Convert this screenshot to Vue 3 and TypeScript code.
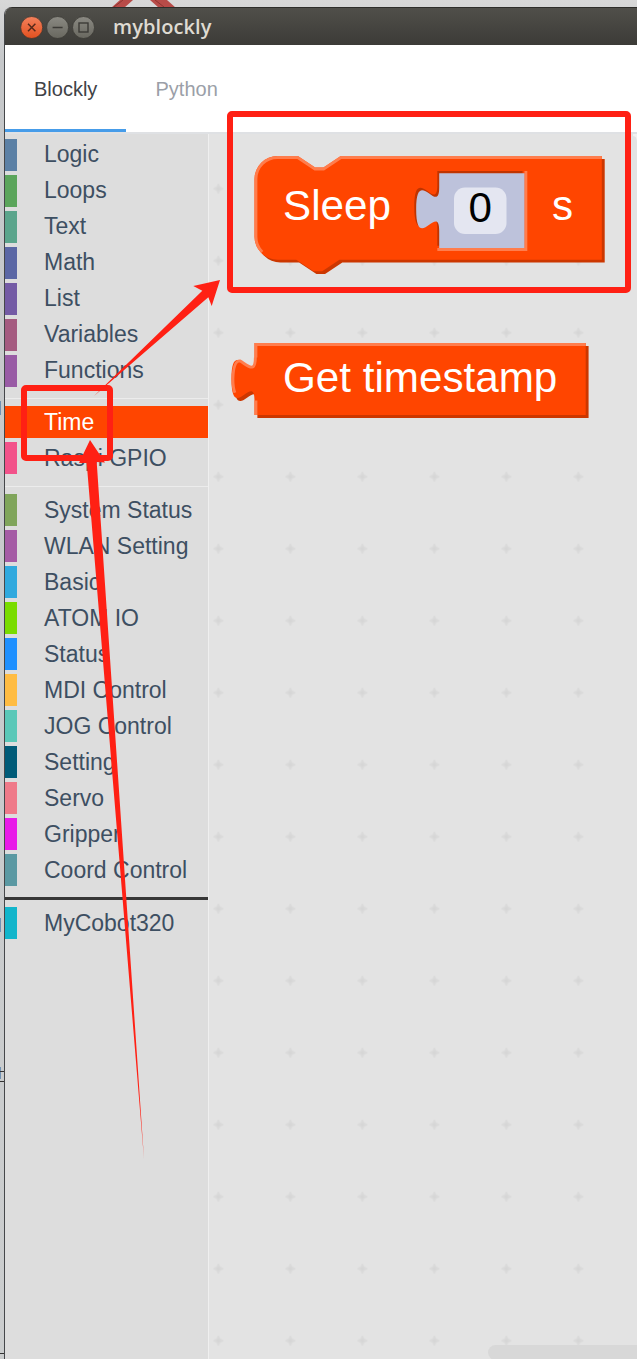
<script setup lang="ts">
interface Category {
  name: string
  color: string
  active?: boolean
}

const groups: { divider: string; items: Category[] }[] = [
  {
    divider: 'none',
    items: [
      { name: 'Logic', color: '#5b80a5' },
      { name: 'Loops', color: '#5ba55b' },
      { name: 'Text', color: '#5ba58c' },
      { name: 'Math', color: '#5b67a5' },
      { name: 'List', color: '#745ba5' },
      { name: 'Variables', color: '#a55b80' },
      { name: 'Functions', color: '#995ba5' },
    ],
  },
  {
    divider: 'light',
    items: [
      { name: 'Time', color: '#ff4500', active: true },
      { name: 'Raspi GPIO', color: '#f2528a' },
    ],
  },
  {
    divider: 'light',
    items: [
      { name: 'System Status', color: '#80a55b' },
      { name: 'WLAN Setting', color: '#a55ba5' },
      { name: 'Basic', color: '#30a9de' },
      { name: 'ATOM IO', color: '#79dc00' },
      { name: 'Status', color: '#1e90ff' },
      { name: 'MDI Control', color: '#ffbc42' },
      { name: 'JOG Control', color: '#5ac8b8' },
      { name: 'Setting', color: '#005b78' },
      { name: 'Servo', color: '#ef7a89' },
      { name: 'Gripper', color: '#e81be8' },
      { name: 'Coord Control', color: '#5b99a3' },
    ],
  },
  { divider: 'dark', items: [{ name: 'MyCobot320', color: '#12b5cb' }] },
]

const sleepPath =
  'M0,8 A8,8 0 0,1 8,0 H15 l6,4 3,0 6,-4 H120.6 V36 H29.5 l-6,4 -3,0 -6,-4 H8 A8,8 0 0,1 0,28 Z'
const stampPath = 'M0,0 H115 V25 H0 V20 c0,-10 -8,8 -8,-7.5 s8,2.5 8,-7.5 Z'
const valuePath = 'M0,0 H29.6 V26 H0 V20 c0,-10 -8,8 -8,-7.5 s8,2.5 8,-7.5 Z'
</script>

<template>
  <div class="screen">
    <svg class="backdrop" width="637" height="1359" viewBox="0 0 637 1359">
      <path d="M111 8 L120 0 H133 L124 8 Z M150 0 H167 L176 8 H159 Z" fill="#b84b48" />
      <path d="M114 7 L123 0 M155 0 L164 7" stroke="#8f3431" stroke-width="1" />
      <path d="M0 401 h1 v14 h-1z M0 918 h1 v14 h-1z M0 1067 h1 v12 h-1z" fill="#6f91b3" />
      <path d="M0 1071.5 h4 M0 1081.5 h4 M0 1353.5 h4" stroke="#333" stroke-width="1.2" />
    </svg>
    <div class="window">
      <header class="titlebar">
        <svg class="controls" width="76" height="24" viewBox="0 0 76 24">
          <defs>
            <linearGradient id="close" x2="0" y2="1">
              <stop offset="0" stop-color="#f4815c" />
              <stop offset="1" stop-color="#e2501f" />
            </linearGradient>
            <linearGradient id="grey" x2="0" y2="1">
              <stop offset="0" stop-color="#8b8a83" />
              <stop offset="1" stop-color="#68675f" />
            </linearGradient>
          </defs>
          <circle cx="11.7" cy="11.5" r="11" fill="url(#close)" stroke="#35342f" stroke-width=".7" />
          <path d="M8 7.8 l7.4 7.4 M15.4 7.8 l-7.4 7.4" stroke="#57291a" stroke-width="1.5" />
          <circle cx="37.6" cy="11.5" r="11" fill="url(#grey)" stroke="#35342f" stroke-width=".7" />
          <path d="M32.6 11.5 h10" stroke="#3c3b37" stroke-width="1.4" />
          <circle cx="63.5" cy="11.5" r="11" fill="url(#grey)" stroke="#35342f" stroke-width=".7" />
          <rect x="59" y="7" width="9" height="9" fill="none" stroke="#3c3b37" stroke-width="1.4" />
        </svg>
        <span class="title">myblockly</span>
      </header>
      <nav class="tabs">
        <div class="tab current">Blockly</div>
        <div class="tab">Python</div>
      </nav>
      <main class="body">
        <aside class="toolbox">
          <template v-for="(group, i) in groups" :key="i">
            <div v-if="group.divider !== 'none'" class="divider" :class="group.divider"></div>
            <div
              v-for="item in group.items"
              :key="item.name"
              class="row"
              :class="{ active: item.active, lower: i > 0 }"
              :style="{ borderLeftColor: item.color }"
            >
              {{ item.name }}
            </div>
          </template>
        </aside>
        <section class="workspace">
          <svg class="canvas" width="428" height="1225" viewBox="209 134 428 1225">
            <defs>
              <pattern id="grid" x="182.4" y="152.7" width="72" height="72" patternUnits="userSpaceOnUse">
                <path
                  d="M36 31.5 L37.5 34.5 L40.5 36 L37.5 37.5 L36 40.5 L34.5 37.5 L31.5 36 L34.5 34.5 Z"
                  fill="#d6d6d6"
                  stroke="#dadada"
                  stroke-width="1.4"
                  stroke-linejoin="round"
                />
              </pattern>
            </defs>
            <rect x="209" y="134" width="428" height="1225" fill="url(#grid)" />
            <path d="M633 134 h4 v8 q0 -6 -4 -6z" fill="#f2f2f2" />

            <g transform="translate(254.5 156) scale(2.88)">
              <path :d="sleepPath" fill="#cc3700" transform="translate(1 1)" />
              <path :d="sleepPath" fill="#ff4500" />
              <path
                d="M2.7,33.3 A7.5,7.5 0 0,1 .5,28 V8 A7.5,7.5 0 0,1 8,.5 H15 l6,4 3,0 6,-4 H120.6"
                fill="none"
                stroke="#ff7d4d"
              />
            </g>
            <g transform="translate(439.2 173.2) scale(2.88)">
              <path :d="valuePath" fill="#c03400" transform="translate(-.65 -.8)" />
              <path d="M29.6,-.8 h1 V27 H-.65 V26 H29.6 Z" fill="#ff7d4d" />
              <path :d="valuePath" fill="#bdc2db" />
            </g>
            <rect x="454" y="187.5" width="52.5" height="46.5" rx="11" fill="#e4e6f1" />

            <g transform="translate(254.5 343) scale(2.88)">
              <path :d="stampPath" fill="#cc3700" transform="translate(1 1)" />
              <path :d="stampPath" fill="#ff4500" />
              <path
                d="M115,.5 H.5 V5 M.5,20 V25 M.3,5 c0,6 -3,2.5 -5.4,1.2 q-2.2,0 -2.4,6.3 q0,3 .7,4.8"
                fill="none"
                stroke="#ff7d4d"
              />
            </g>

            <g class="label">
              <text x="283" y="219.5">Sleep</text>
              <text x="468.5" y="222" class="value">0</text>
              <text x="552" y="219.5">s</text>
              <text x="283" y="392">Get timestamp</text>
            </g>
            <rect x="488" y="1345" width="170" height="15" rx="7.5" fill="#d8d8d8" />
          </svg>
        </section>
      </main>
    </div>
    <svg class="marks" width="637" height="1359" viewBox="0 0 637 1359">
      <g fill="none" stroke="#ff2014" stroke-width="6">
        <rect x="230" y="114" width="398" height="176" rx="2" />
        <rect x="24" y="388" width="86" height="70" rx="2" />
      </g>
      <g fill="#ff2014">
        <path d="M94 396 L202.3 290.7 L193.3 286 L220 280 L211.7 306 L208.3 297.3 Z" />
        <path d="M144 1159 L86.7 463 L79 463 L90 440 L105 462.5 L96.7 462 Z" />
      </g>
    </svg>
  </div>
</template>

<style>
body {
  margin: 0;
  overflow: hidden;
}
</style>

<style scoped>
.screen {
  position: relative;
  box-sizing: border-box;
  width: 637px;
  height: 1359px;
  padding: 7px 0 0 4px;
  overflow: hidden;
  background: linear-gradient(#d8d8d8, #c6c8ca 60px, #cbcdce);
  font-family: 'Liberation Sans', Arial, sans-serif;
}
.backdrop,
.marks {
  position: absolute;
  left: 0;
  top: 0;
}
.window {
  position: relative;
  box-sizing: border-box;
  width: 633px;
  height: 1352px;
  border-left: 1px solid #45474a;
  border-top-left-radius: 8px;
  overflow: hidden;
  display: flex;
  flex-direction: column;
  background: #fff;
}
.titlebar {
  box-sizing: border-box;
  height: 38px;
  flex: none;
  display: flex;
  align-items: center;
  padding: 2px 0 0 15px;
  border-top: 1px solid #2e2d2a;
  background: linear-gradient(#504f4a, #3c3b37);
}
.controls {
  margin-right: 17px;
}
.title {
  height: 36px;
  font: 600 20px/34px 'Open Sans', 'Noto Sans', sans-serif;
  color: #dfdbd2;
  letter-spacing: 0.1px;
}
.tabs {
  height: 87px;
  flex: none;
  display: flex;
  border-bottom: 2px solid #dfe1e4;
}
.tab {
  box-sizing: border-box;
  height: 87px;
  padding: 0 29px;
  font-size: 20px;
  line-height: 88px;
  color: #9b9fa8;
}
.tab.current {
  width: 121px;
  color: #404247;
  border-bottom: 3px solid #469ce9;
}
.tab + .tab {
  padding-left: 29.5px;
}
.body {
  flex: 1;
  display: flex;
  min-height: 0;
}
.toolbox {
  box-sizing: border-box;
  display: flex;
  flex-direction: column;
  width: 204px;
  flex: none;
  padding-top: 5px;
  background: #ddd;
  border-right: 1px solid #efefef;
}
.row {
  box-sizing: border-box;
  flex: none;
  height: 32px;
  margin-bottom: 4px;
  padding-left: 27px;
  border-left: 12px solid;
  font-size: 23px;
  line-height: 31px;
  color: #3d4f62;
  white-space: nowrap;
}
.row.lower {
  line-height: 33px;
}
.row.active {
  background: #ff4500;
  color: #fff;
}
.divider {
  flex: none;
  height: 1px;
  margin: 7.2px 0;
}
.light {
  background: #ececec;
}
.dark {
  height: 3px;
  margin: 7px 0;
  background: #373737;
}
.workspace {
  flex: 1;
  background: #e3e3e3;
}
.canvas {
  display: block;
}
.label {
  font-size: 42.2px;
  fill: #fff;
}
.value {
  fill: #000;
}
</style>
